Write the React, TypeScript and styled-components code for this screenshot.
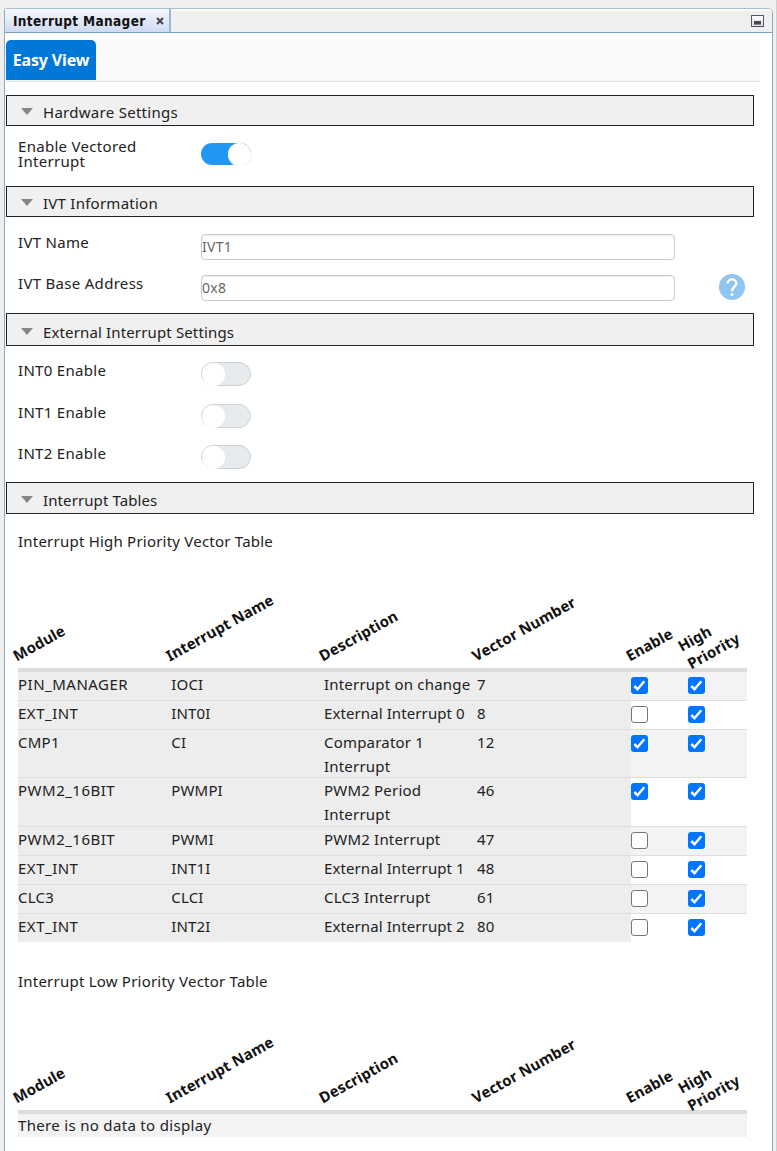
import React from 'react';
import styled, { createGlobalStyle } from 'styled-components';

const Global = createGlobalStyle`
  * { box-sizing: border-box; }
  html, body { margin: 0; padding: 0; }
  body {
    background: #efefef;
    font-family: "Noto Sans", "Open Sans", sans-serif;
    font-size: 15px;
    color: #222;
    overflow: hidden;
  }
`;

const Screen = styled.div`
  height: 1151px;
  padding: 8px 0 0 4px;
  display: flex;
  overflow: hidden;
`;

const Pane = styled.div`
  width: 769px;
  height: 1160px;
  flex: none;
  display: flex;
  flex-direction: column;
  background: #fff;
  border: 1px solid #8eabc8;
  border-top-color: #a9bfd0;
  border-radius: 3px 5px 0 0;
`;

const Edge = styled.div`
  width: 4px;
  margin-top: -8px;
  border-right: 1px solid #d0d0d0;
  flex: none;
`;

const TitleBar = styled.div`
  height: 24px;
  flex: none;
  display: flex;
  align-items: stretch;
  background: #efefef;
  border-top: 2px solid #fbfbf6;
  border-bottom: 1px solid #7b9ebf;
  border-radius: 3px 4px 0 0;
`;

const WindowTab = styled.div`
  width: 166px;
  margin-top: -2px;
  padding-left: 8px;
  display: flex;
  align-items: center;
  background: linear-gradient(#f6f8fd, #cfdaf2);
  border-right: 2px solid #9db7d2;
  color: #111;
  font-family: "DejaVu Sans", sans-serif;
  font-size: 13.5px;
  font-weight: 700;
  font-stretch: condensed;
  line-height: 22px;
  white-space: nowrap;
`;

const WindowTitle = styled.span`
  width: 143px;
  letter-spacing: 0.35px;
`;

const Minimize = styled.div`
  width: 13px;
  height: 12px;
  margin: 4px 8px 0 auto;
  padding: 5px 2px 0;
  border: 1px solid #555563;
  background: linear-gradient(#fff, #dcdce2);
  &::after {
    content: "";
    display: block;
    height: 3px;
    background: #4a4a55;
    border-bottom: 1px solid #85858f;
  }
`;

const ViewTabs = styled.div`
  width: 754px;
  height: 42px;
  margin: 7px 0 13px 1px;
  flex: none;
  background: #f8f9fb;
  border-bottom: 1px solid #dfe2e8;
`;

const ViewTab = styled.div`
  width: 90px;
  height: 40px;
  background: #0078d7;
  border-radius: 5px 5px 0 0;
  color: #fff;
  font-size: 16px;
  font-weight: 700;
  line-height: 40px;
  text-align: center;
  white-space: nowrap;
  letter-spacing: -0.15px;
`;

const SectionHead = styled.div<{ $h?: number }>`
  width: 748px;
  height: ${(p) => p.$h ?? 31}px;
  margin-left: 1px;
  padding: ${(p) => (p.$h ? 4 : 2)}px 0 0 14px;
  flex: none;
  display: flex;
  align-items: center;
  background: #f0f0f0;
  border: 1px solid #222;
`;

const Arrow = styled.span`
  width: 0;
  margin: -1px 10px 0 0;
  border: 6px solid transparent;
  border-top: 7px solid #868686;
  border-bottom: 0;
`;

const Body = styled.div<{ $h: number }>`
  height: ${(p) => p.$h}px;
  flex: none;
  padding-left: 13px;
`;

const Field = styled.div<{ $h: number; $top?: number }>`
  height: ${(p) => p.$h}px;
  display: flex;
  align-items: flex-start;
  padding-top: ${(p) => p.$top ?? 0}px;
`;

const Label = styled.div<{ $ls?: number }>`
  width: 183px;
  line-height: 15px;
  letter-spacing: ${(p) => p.$ls ?? 0.3}px;
`;

const Space = styled.span<{ $ls?: number }>`
  letter-spacing: ${(p) => p.$ls ?? 0}px;
  white-space: nowrap;
`;

const Toggle = styled.div<{ $on?: boolean }>`
  width: 50px;
  height: ${(p) => (p.$on ? 22 : 24)}px;
  margin-top: ${(p) => (p.$on ? 4 : -1)}px;
  display: flex;
  align-items: center;
  justify-content: ${(p) => (p.$on ? 'flex-end' : 'flex-start')};
  border-radius: 12px;
  background: ${(p) => (p.$on ? '#2196f3' : '#e7ebee')};
  border: ${(p) => (p.$on ? '0' : '1px solid #cfd1d3')};
  &::after {
    content: "";
    width: 23px;
    height: 23px;
    border-radius: 50%;
    background: #fff;
    box-shadow: ${(p) => (p.$on ? '0 0 1px #ccc' : 'none')};
  }
`;

const Input = styled.input`
  width: 474px;
  height: 26px;
  margin-top: -1px;
  padding: 0 0 1px;
  background: #fff;
  border: 1px solid #ccc;
  border-radius: 4px;
  box-shadow: inset 0 1px 1px #ececec;
  color: #666;
  font: 14px "Noto Sans", sans-serif;
  letter-spacing: 0.25px;
`;

const Help = styled.svg`
  width: 26px;
  height: 26px;
  margin: -2px 0 0 44px;
`;

const Caption = styled.div`
  height: 27px;
  line-height: 27px;
  letter-spacing: 0.22px;
`;

const Heads = styled.div`
  width: 729px;
  height: 117px;
  display: grid;
  grid-template-columns: 153px 153px 152.5px 154px 116.5px;
  align-items: end;
  border-bottom: 4px solid #dcdcdc;
  color: #111;
  font-weight: 700;
`;

const Slant = styled.div<{ $dx?: number; $dy?: number }>`
  width: max-content;
  line-height: 20px;
  letter-spacing: 0.1px;
  transform-origin: 0 100%;
  transform: translate(${(p) => p.$dx ?? 0.8}px, ${(p) => p.$dy ?? -2.8}px) rotate(-29deg);
`;

const CheckHeads = styled.div`
  display: grid;
  grid-template-columns: 57px 1fr;
  align-items: end;
`;

const Row = styled.div<{ $tall?: boolean; $alt?: boolean; $last?: boolean }>`
  width: 729px;
  height: ${(p) => (p.$tall ? 48.8 : 28.8)}px;
  display: grid;
  grid-template-columns: 153.3px 152.7px 153px 154px 57px 1fr;
  grid-template-rows: 100%;
  background: ${(p) => (p.$alt ? '#f3f3f3' : '#fff')};
  border-bottom: ${(p) => (p.$last ? '0' : '1px solid #dedede')};
`;

const Cell = styled.div<{ $ls?: number }>`
  background: #ededed;
  line-height: 24px;
  white-space: pre;
  letter-spacing: ${(p) => p.$ls ?? 0}px;
`;

const CheckBox = styled.span<{ $on: boolean }>`
  width: 17px;
  height: 17px;
  margin-top: 5px;
  display: grid;
  place-items: center;
  border-radius: 3px;
  background: ${(p) => (p.$on ? '#0075ff' : '#fff')};
  border: ${(p) => (p.$on ? '0' : '1px solid #767676')};
`;

const Empty = styled.div`
  width: 729px;
  height: 23px;
  background: #f3f3f3;
  line-height: 23px;
  letter-spacing: 0.32px;
`;

function Check({ on }: { on: boolean }) {
  return (
    <CheckBox $on={on}>
      {on && (
        <svg width="17" height="17" viewBox="0 0 17 17" fill="none" stroke="#fff" strokeWidth="2.5">
          <path d="M3.3 9 L6.5 12.2 L13.3 4.2" />
        </svg>
      )}
    </CheckBox>
  );
}

function Section({ title, h, ls }: { title: string; h?: number; ls: number }) {
  return (
    <SectionHead $h={h}>
      <Arrow />
      <Space $ls={ls}>{title}</Space>
    </SectionHead>
  );
}

function Headings() {
  return (
    <Heads>
      <Slant>Module</Slant>
      <Slant>Interrupt Name</Slant>
      <Slant>Description</Slant>
      <Slant>Vector Number</Slant>
      <CheckHeads>
        <Slant>Enable</Slant>
        <Slant $dx={5.3} $dy={5}>High<br />Priority</Slant>
      </CheckHeads>
    </Heads>
  );
}

const rows: [string, string, string, string, boolean][] = [
  ['PIN_MANAGER', 'IOCI', 'Interrupt on change', '7', true],
  ['EXT_INT', 'INT0I', 'External Interrupt 0', '8', false],
  ['CMP1', 'CI', 'Comparator 1\nInterrupt', '12', true],
  ['PWM2_16BIT', 'PWMPI', 'PWM2 Period\nInterrupt', '46', true],
  ['PWM2_16BIT', 'PWMI', 'PWM2 Interrupt', '47', false],
  ['EXT_INT', 'INT1I', 'External Interrupt 1', '48', false],
  ['CLC3', 'CLCI', 'CLC3 Interrupt', '61', false],
  ['EXT_INT', 'INT2I', 'External Interrupt 2', '80', false],
];

export default function App() {
  return (
    <>
      <Global />
      <Screen>
        <Pane>
          <TitleBar>
            <WindowTab>
              <WindowTitle>Interrupt Manager</WindowTitle>
              <svg width="8" height="8" viewBox="0 0 8 8" stroke="#444" strokeWidth="2">
                <path d="M1 1 L7 7 M7 1 L1 7" />
              </svg>
            </WindowTab>
            <Minimize />
          </TitleBar>
          <ViewTabs>
            <ViewTab>Easy View</ViewTab>
          </ViewTabs>
          <Section title="Hardware Settings" ls={0.28} />
          <Body $h={60}>
            <Field $h={60} $top={13}>
              <Label>Enable Vectored<br />Interrupt</Label>
              <Toggle $on />
            </Field>
          </Body>
          <Section title="IVT Information" ls={0.25} />
          <Body $h={96}>
            <Field $h={59} $top={18}>
              <Label>IVT Name</Label>
              <Input defaultValue="IVT1" />
            </Field>
            <Field $h={37}>
              <Label>IVT Base Address</Label>
              <Input defaultValue="0x8" />
              <Help viewBox="0 0 26 26">
                <circle cx="13" cy="13" r="13" fill="#90c5ef" />
                <path d="M8.7 9.6 A4.3 4.3 0 0 1 17.3 9.6 C17.3 12.6 13 13 13 17.3" fill="none" stroke="#fff" strokeWidth="2.4" />
                <rect x="11.7" y="19.2" width="2.6" height="2.6" fill="#fff" />
              </Help>
            </Field>
          </Body>
          <Section title="External Interrupt Settings" h={33} ls={0.14} />
          <Body $h={136}>
            <Field $h={59} $top={17}>
              <Label>INT0 Enable</Label>
              <Toggle />
            </Field>
            <Field $h={41}>
              <Label>INT1 Enable</Label>
              <Toggle />
            </Field>
            <Field $h={36}>
              <Label>INT2 Enable</Label>
              <Toggle />
            </Field>
          </Body>
          <Section title="Interrupt Tables" h={32} ls={0.1} />
          <Body $h={640}>
            <Field $h={41} $top={14}>
              <Caption>Interrupt High Priority Vector Table</Caption>
            </Field>
            <Headings />
            {rows.map(([mod, name, desc, num, on], i) => (
              <Row key={num} $alt={i % 2 === 0} $tall={desc.includes('\n')} $last={i === rows.length - 1}>
                <Cell $ls={mod.length > 4 ? 0.5 : 0.25}>{mod}</Cell>
                <Cell $ls={0.15}>{name}</Cell>
                <Cell $ls={desc.startsWith('External') ? 0.1 : 0.2}>{desc}</Cell>
                <Cell $ls={0.2}>{num}</Cell>
                <Check on={on} />
                <Check on />
              </Row>
            ))}
            <Field $h={55} $top={26}>
              <Caption>Interrupt Low Priority Vector Table</Caption>
            </Field>
            <Headings />
            <Empty>There is no data to display</Empty>
          </Body>
        </Pane>
        <Edge />
      </Screen>
    </>
  );
}
